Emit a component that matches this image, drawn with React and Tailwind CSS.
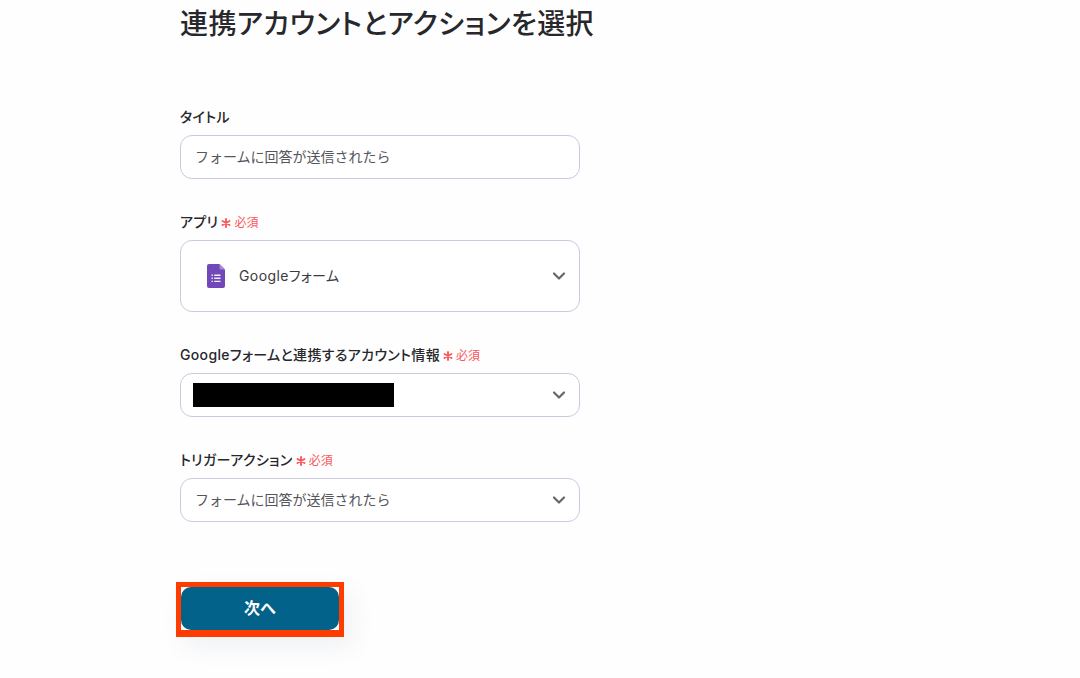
import React from 'react';
import { ChevronDown } from 'lucide-react';

const fontStack = { fontFamily: 'Inter, "Noto Sans CJK JP", sans-serif' };

const RequiredMark = () => (
  <span className="ml-[3px] flex items-center pt-px text-[12px] font-normal tracking-normal text-[#f9585c]">
    <span className="mr-[3px] flex h-[10px] w-[10px] items-center justify-center">
      <svg viewBox="0 0 10 10" className="h-[10px] w-[10px]" stroke="currentColor" strokeWidth="1.9" strokeLinecap="round">
        <path d="M5 1v8M1.5 3l7 4M8.5 3l-7 4" />
      </svg>
    </span>
    必須
  </span>
);

const FieldLabel = ({ children, required }) => (
  <div className="flex h-5 items-center text-[14px] font-medium leading-5 tracking-[0.35px] text-[#27272c] [font-feature-settings:'palt']">
    {children}
    {required && <RequiredMark />}
  </div>
);

const FormsIcon = () => (
  <svg viewBox="0 0 18 24" className="h-6 w-[18px]">
    <path d="M2 0h10.5L18 5.5V22a2 2 0 0 1-2 2H2a2 2 0 0 1-2-2V2a2 2 0 0 1 2-2z" fill="#7248b9" />
    <path d="M12.5 0 18 5.5h-4a1.5 1.5 0 0 1-1.5-1.5z" fill="#a58ad6" />
    <path d="M4.5 10.5h1.4v1.4H4.5zm0 3.1h1.4V15H4.5zm0 3.1h1.4v1.4H4.5zM7.2 10.5h6.3v1.4H7.2zm0 3.1h6.3V15H7.2zm0 3.1h6.3v1.4H7.2z" fill="#f1ecfa" />
  </svg>
);

const Box = ({ children, tall, chevron = true }) => (
  <div className={`flex w-[400px] items-center justify-between rounded-xl border border-[#c9cbdc] bg-white text-[14px] text-[#55565c] ${tall ? 'h-[72px]' : 'h-11'}`}>
    {children}
    {chevron && <ChevronDown className="mr-[10px] h-5 w-5 text-[#65666b]" strokeWidth={2.6} />}
  </div>
);

const App = () => {
  return (
    <div className="h-[678px] w-[1080px] overflow-hidden bg-[#fefefe] pl-[180px] pt-[6px]" style={fontStack}>
      <h1 className="h-9 text-[28px] font-medium leading-9 tracking-[0.4px] text-[#27272c] [font-feature-settings:'palt']">連携アカウントとアクションを選択</h1>

      <div className="mt-[65px]">
        <FieldLabel>タイトル</FieldLabel>
        <div className="mt-2">
          <Box chevron={false}>
            <span className="pb-0.5 pl-[14px]">フォームに回答が送信されたら</span>
          </Box>
        </div>
      </div>

      <div className="mt-[33px]">
        <FieldLabel required>アプリ</FieldLabel>
        <div className="mt-2">
          <Box tall>
            <span className="flex items-center pl-[26px] text-[#3a3a40]">
              <FormsIcon />
              <span className="ml-[14px] pb-0.5 tracking-[0.4px] [font-feature-settings:'palt']">Googleフォーム</span>
            </span>
          </Box>
        </div>
      </div>

      <div className="mt-[33px]">
        <FieldLabel required>Googleフォームと連携するアカウント情報</FieldLabel>
        <div className="mt-2">
          <Box>
            <span className="ml-3 h-6 w-[201px] bg-black" />
          </Box>
        </div>
      </div>

      <div className="mt-[33px]">
        <FieldLabel required>トリガーアクション</FieldLabel>
        <div className="mt-2">
          <Box>
            <span className="pb-0.5 pl-[14px]">フォームに回答が送信されたら</span>
          </Box>
        </div>
      </div>

      <div className="-ml-1 mt-[60px] w-[168px] border-[5px] border-b-[7px] border-[#ff3c00] bg-white shadow-[8px_10px_24px_rgba(60,70,110,0.07)]">
        <button className="flex h-[43px] w-full items-center justify-center rounded-[10px] bg-[#02628a] pb-0.5 text-[16px] font-bold text-white">
          次へ
        </button>
      </div>
    </div>
  );
};

export default App;
